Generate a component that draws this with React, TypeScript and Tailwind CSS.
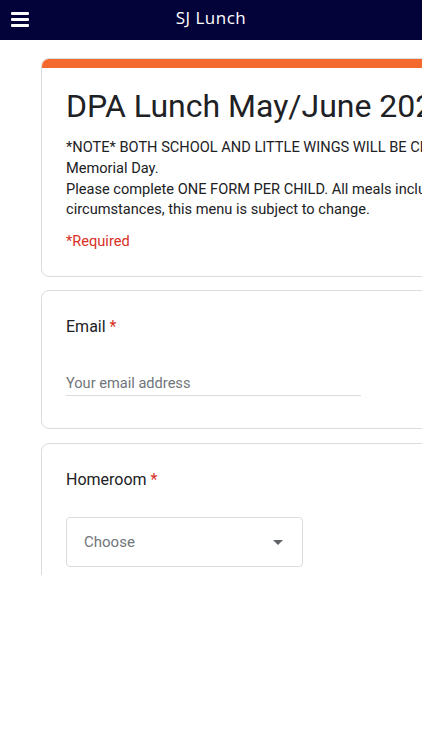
import React from "react";

export default function App() {
  return (
    <div className="w-[422px] h-[750px] bg-white overflow-hidden" style={{ fontFamily: "Roboto, 'Liberation Sans', sans-serif" }}>
      <header className="h-[40px] bg-[#03033a] flex items-center relative">
        <div className="absolute left-[11px] top-[12px] flex flex-col gap-[3px]">
          <div className="w-[18px] h-[3px] bg-white rounded-[1px]" />
          <div className="w-[18px] h-[3px] bg-white rounded-[1px]" />
          <div className="w-[18px] h-[3px] bg-white rounded-[1px]" />
        </div>
        <div className="flex-1 text-center text-white text-[17px] tracking-[0.5px] pb-[4px]" style={{ fontFamily: "'Open Sans', sans-serif" }}>
          SJ Lunch
        </div>
      </header>
      <div className="h-[535px] overflow-hidden pl-[41px] pt-[18px]">
        <div className="w-[640px]">
          <div className="rounded-[8px] border border-[#dadce0] overflow-hidden">
            <div className="h-[10px] bg-[#f4692d] -mx-px -mt-px" />
            <div className="px-[24px] pt-[18px] pb-[24px]">
              <h1 className="text-[32px] leading-[40px] text-[#202124] whitespace-nowrap">DPA Lunch May/June 2024</h1>
              <div className="mt-[11px] text-[14.6px] leading-[20.8px] text-[#202124]">
                <p className="whitespace-nowrap">*NOTE* BOTH SCHOOL AND LITTLE WINGS WILL BE CLOSED on Monday, May 27th for</p>
                <p>Memorial Day.</p>
                <p className="whitespace-nowrap">Please complete ONE FORM PER CHILD. All meals include milk. Due to unforeseen</p>
                <p>circumstances, this menu is subject to change.</p>
              </div>
              <div className="mt-[11px] text-[14.6px] leading-[21px] text-[#d93025]">*Required</div>
            </div>
          </div>

          <div className="mt-[13px] rounded-[8px] border border-[#dadce0] px-[24px] pt-[24px] pb-[32px]">
            <div className="text-[16px] leading-[24px] text-[#202124]">
              Email <span className="text-[#d93025]">*</span>
            </div>
            <div className="mt-[34px] w-[295px] border-b border-[#dadce0] pb-[2px] text-[14.6px] leading-[20px] text-[#70757a]">
              Your email address
            </div>
          </div>

          <div className="mt-[14px] rounded-[8px] border border-[#dadce0] px-[24px] pt-[24px] pb-[32px]">
            <div className="text-[16px] leading-[24px] text-[#202124]">
              Homeroom <span className="text-[#d93025]">*</span>
            </div>
            <div className="mt-[25px] w-[237px] h-[50px] border border-[#dadce0] rounded-[4px] flex items-center justify-between pl-[17px] pr-[19px]">
              <span className="text-[15px] text-[#70757a]">Choose</span>
              <svg width="10" height="5" viewBox="0 0 10 5">
                <path d="M0 0 L10 0 L5 5 Z" fill="#5f6368" />
              </svg>
            </div>
          </div>
        </div>
      </div>
    </div>
  );
}
